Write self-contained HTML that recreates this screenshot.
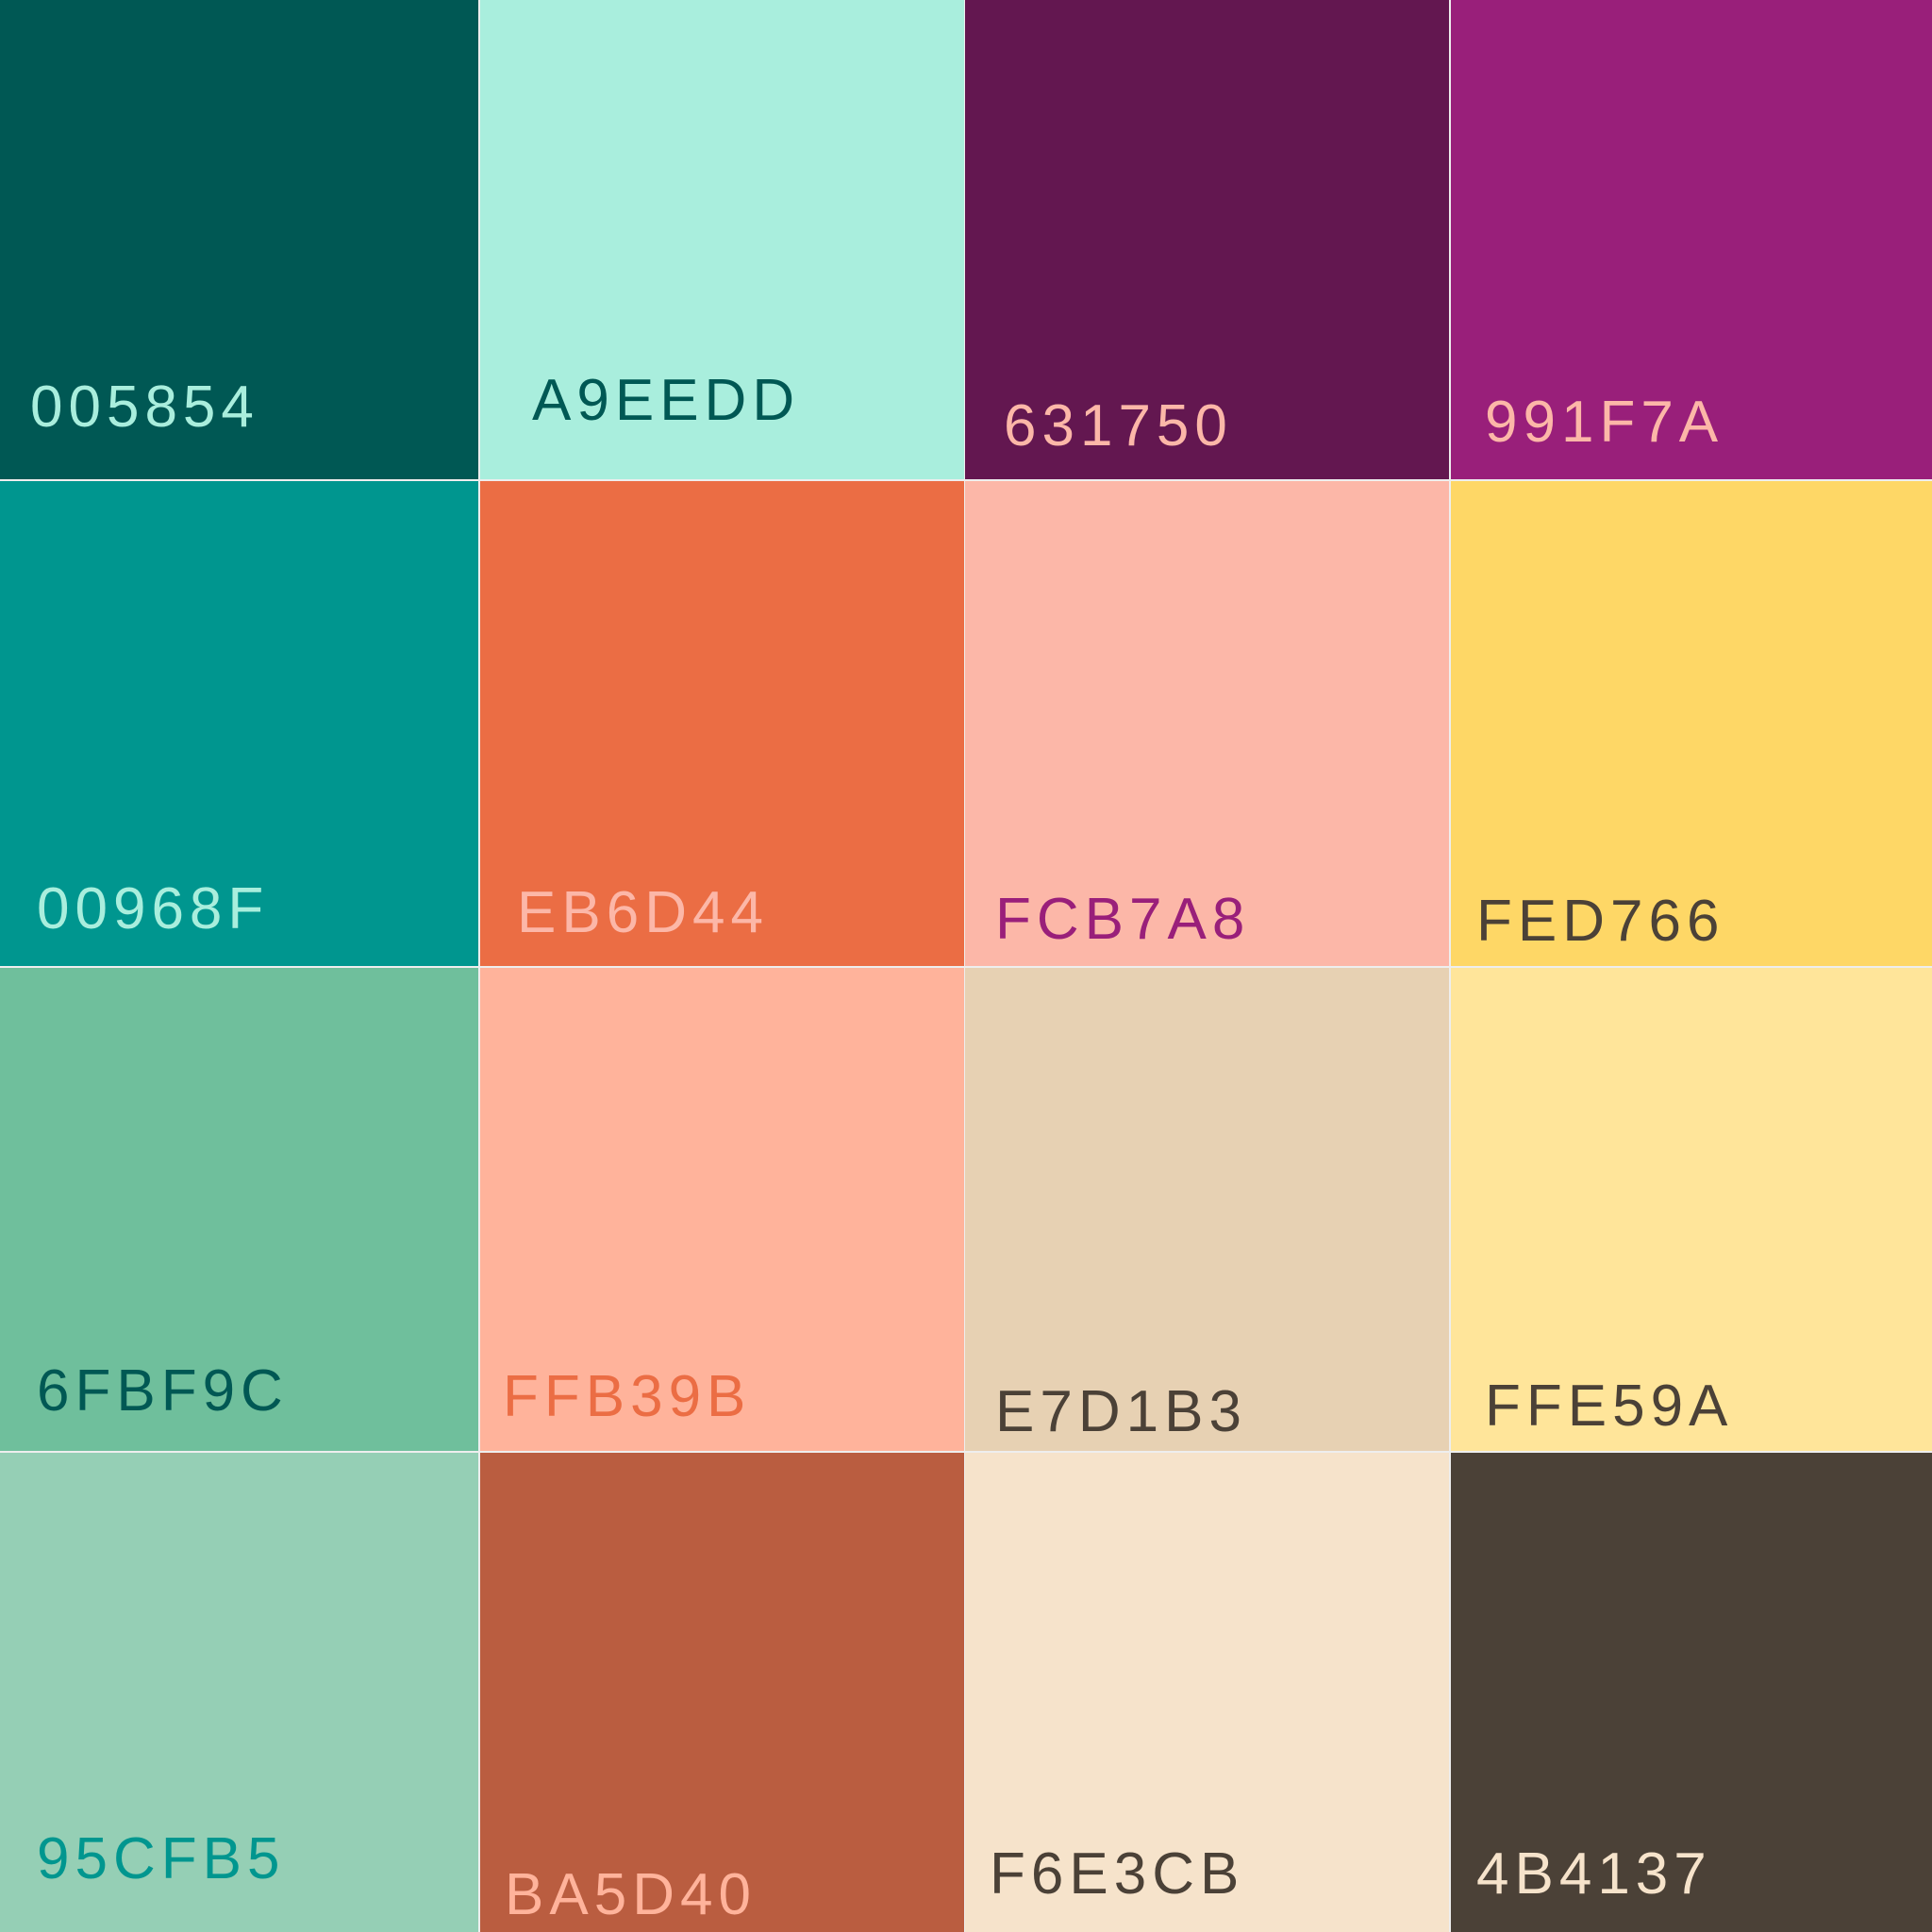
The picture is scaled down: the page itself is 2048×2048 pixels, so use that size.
<!DOCTYPE html>
<html><head><meta charset="utf-8">
<style>
html,body{margin:0;padding:0;background:#eeeeee;}
body{width:2048px;height:2048px;position:relative;overflow:hidden;}
.c{position:absolute;}
.l{position:absolute;font-family:"Liberation Sans",sans-serif;font-size:62px;line-height:62px;letter-spacing:6px;white-space:nowrap;}
</style></head><body>
<div class="c" style="left:0;top:0;width:507px;height:508px;background:#005854"></div>
<div class="c" style="left:509px;top:0;width:513px;height:508px;background:#A9EEDD"></div>
<div class="c" style="left:1023px;top:0;width:513px;height:508px;background:#631750"></div>
<div class="c" style="left:1538px;top:0;width:510px;height:508px;background:#991F7A"></div>

<div class="c" style="left:0;top:510px;width:507px;height:514px;background:#00968F"></div>
<div class="c" style="left:509px;top:510px;width:513px;height:514px;background:#EB6D44"></div>
<div class="c" style="left:1023px;top:510px;width:513px;height:514px;background:#FCB7A8"></div>
<div class="c" style="left:1538px;top:510px;width:510px;height:514px;background:#FED766"></div>

<div class="c" style="left:0;top:1026px;width:507px;height:512px;background:#6FBF9C"></div>
<div class="c" style="left:509px;top:1026px;width:513px;height:512px;background:#FFB39B"></div>
<div class="c" style="left:1023px;top:1026px;width:513px;height:512px;background:#E7D1B3"></div>
<div class="c" style="left:1538px;top:1026px;width:510px;height:512px;background:#FFE59A"></div>

<div class="c" style="left:0;top:1540px;width:507px;height:508px;background:#95CFB5"></div>
<div class="c" style="left:509px;top:1540px;width:513px;height:508px;background:#BA5D40"></div>
<div class="c" style="left:1023px;top:1540px;width:513px;height:508px;background:#F6E3CB"></div>
<div class="c" style="left:1538px;top:1540px;width:510px;height:508px;background:#4B4137"></div>

<div class="l" style="left:32px;top:401px;color:#A9EEDD">005854</div>
<div class="l" style="left:564px;top:394px;color:#005854">A9EEDD</div>
<div class="l" style="left:1064px;top:421px;color:#FCB7A8">631750</div>
<div class="l" style="left:1574px;top:417px;color:#FCB7A8">991F7A</div>

<div class="l" style="left:39px;top:933px;color:#A9EEDD">00968F</div>
<div class="l" style="left:548px;top:937px;color:#FCB7A8">EB6D44</div>
<div class="l" style="left:1055px;top:944px;color:#991F7A">FCB7A8</div>
<div class="l" style="left:1565px;top:946px;color:#4B4137">FED766</div>

<div class="l" style="left:39px;top:1444px;color:#005854">6FBF9C</div>
<div class="l" style="left:533px;top:1450px;color:#EB6D44">FFB39B</div>
<div class="l" style="left:1055px;top:1466px;color:#4B4137">E7D1B3</div>
<div class="l" style="left:1574px;top:1460px;color:#4B4137">FFE59A</div>

<div class="l" style="left:39px;top:1940px;color:#00968F">95CFB5</div>
<div class="l" style="left:535px;top:1978px;color:#FFB39B">BA5D40</div>
<div class="l" style="left:1049px;top:1956px;color:#4B4137">F6E3CB</div>
<div class="l" style="left:1565px;top:1956px;color:#F6E3CB">4B4137</div>
</body></html>
